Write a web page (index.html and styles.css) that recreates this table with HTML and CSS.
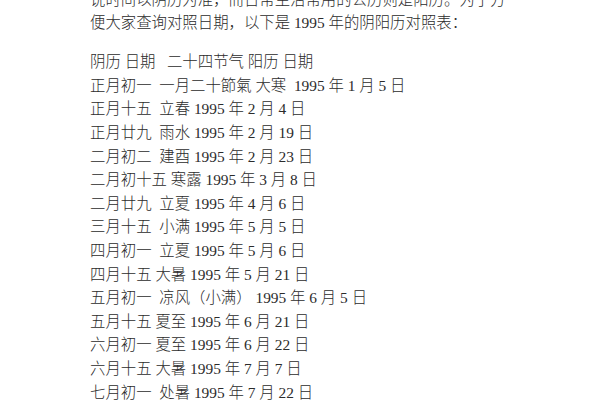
FILE: index.html
```html
<!DOCTYPE html>
<html lang="zh">
<head>
<meta charset="utf-8">
<link rel="stylesheet" href="styles.css">
</head>
<body>
<div class="page">
  <div class="intro">
    <p class="line">说时间以阴历为准，而日常生活常用的公历则是阳历。为了方</p>
    <p class="line">便大家查询对照日期，以下是 1995 年的阴阳历对照表：</p>
  </div>
  <div class="table">
    <p class="line">阴历 日期&nbsp;&nbsp;&nbsp;二十四节气 阳历 日期</p>
    <p class="line">正月初一&nbsp;&nbsp;一月二十節氣 大寒&nbsp;&nbsp;1995 年 1 月 5 日</p>
    <p class="line">正月十五&nbsp;&nbsp;立春 1995 年 2 月 4 日</p>
    <p class="line">正月廿九&nbsp;&nbsp;雨水 1995 年 2 月 19 日</p>
    <p class="line">二月初二&nbsp;&nbsp;建酉 1995 年 2 月 23 日</p>
    <p class="line">二月初十五 寒露 1995 年 3 月 8 日</p>
    <p class="line">二月廿九&nbsp;&nbsp;立夏 1995 年 4 月 6 日</p>
    <p class="line">三月十五&nbsp;&nbsp;小满 1995 年 5 月 5 日</p>
    <p class="line">四月初一&nbsp;&nbsp;立夏 1995 年 5 月 6 日</p>
    <p class="line">四月十五 大暑 1995 年 5 月 21 日</p>
    <p class="line">五月初一&nbsp;&nbsp;凉风（小满） 1995 年 6 月 5 日</p>
    <p class="line">五月十五 夏至 1995 年 6 月 21 日</p>
    <p class="line">六月初一 夏至 1995 年 6 月 22 日</p>
    <p class="line">六月十五 大暑 1995 年 7 月 7 日</p>
    <p class="line">七月初一&nbsp;&nbsp;处暑 1995 年 7 月 22 日</p>
  </div>
</div>
</body>
</html>
```
FILE: styles.css
```css
html, body {
  margin: 0;
  padding: 0;
  background: #ffffff;
  overflow: hidden;
}
.page {
  width: 600px;
  height: 400px;
  overflow: hidden;
  padding-left: 90px;
  box-sizing: border-box;
  font-family: "Liberation Serif", "Noto Sans CJK SC", serif;
  font-size: 15.4px;
  font-weight: 300;
  color: #2b2b2b;
}
.line {
  margin: 0;
  line-height: 23.6px;
  white-space: nowrap;
}
.intro {
  margin-top: -12.4px;
}
.table {
  margin-top: 15.4px;
}
```
